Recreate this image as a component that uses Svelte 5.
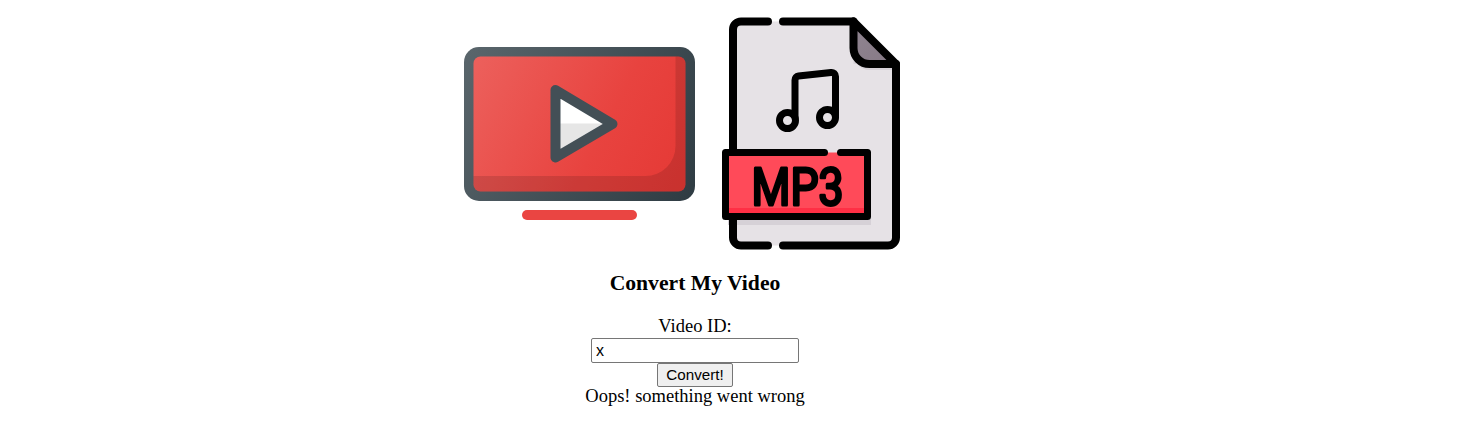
<script>
  let videoId = $state('x');
  let error = $state('Oops! something went wrong');
</script>

<div class="page">
  <div class="icons">
    <svg class="icon" width="232" height="240" viewBox="463 10 232 240">
      <defs>
        <linearGradient id="frame" x1="464" y1="60" x2="695" y2="190" gradientUnits="userSpaceOnUse">
          <stop offset="0" stop-color="#59656b" />
          <stop offset="1" stop-color="#2f3c43" />
        </linearGradient>
        <linearGradient id="screen" x1="474" y1="70" x2="686" y2="180" gradientUnits="userSpaceOnUse">
          <stop offset="0" stop-color="#ec5f5b" />
          <stop offset="0.6" stop-color="#e8433f" />
          <stop offset="1" stop-color="#e53935" />
        </linearGradient>
      </defs>
      <rect x="464" y="47" width="231" height="154" rx="15" fill="url(#frame)" />
      <rect x="473.5" y="56.5" width="212" height="135" rx="7" fill="url(#screen)" />
      <path d="M675.5 56.5h3a7 7 0 0 1 7 7v121a7 7 0 0 1-7 7h-198a7 7 0 0 1-7-7v-8.500h172a30 30 0 0 0 30-30z" fill="#000" fill-opacity="0.12" />
      <path d="M555.500 90L612.500 124L555.500 157.500z" fill="#fff" />
      <path d="M555.500 123.500H611.500L612.500 124L555.500 157.500z" fill="#e6e6e6" />
      <path d="M555.500 90L612.500 124L555.500 157.500z" fill="none" stroke="#434f56" stroke-width="10" stroke-linejoin="round" />
      <rect x="522" y="210" width="115" height="10" rx="5" fill="#ea4542" />
    </svg>
    <svg class="icon" width="232" height="240" viewBox="695 10 232 240">
      <defs>
        <linearGradient id="fold" x1="858" y1="25" x2="892" y2="62" gradientUnits="userSpaceOnUse">
          <stop offset="0" stop-color="#8f8490" />
          <stop offset="1" stop-color="#877a86" />
        </linearGradient>
      </defs>
      <path d="M741 21.500H853.500L896 64V237.500a8 8 0 0 1-8 8H741a8 8 0 0 1-8-8V29.500a8 8 0 0 1 8-8z" fill="#e6e2e6" />
      <path d="M853.500 30V54a16 16 0 0 0 16 16H896V64H853.500z" fill="#d6d1d7" />
      <rect x="728" y="216" width="143" height="9" fill="#d6d1d7" />
      <path d="M853.500 21.500V48a16 16 0 0 0 16 16H896z" fill="url(#fold)" stroke="#000" stroke-width="8" stroke-linejoin="round" />
      <g fill="none" stroke="#000" stroke-width="8" stroke-linecap="round" stroke-linejoin="round">
        <path d="M768 21.500H741a8 8 0 0 0-8 8V150" />
        <path d="M733 220V237.500a8 8 0 0 0 8 8H768" />
        <path d="M783 245.500H888a8 8 0 0 0 8-8V64" />
        <path d="M783 21.500H853.500" />
      </g>
      <g fill="none" stroke="#000" stroke-width="7" stroke-linecap="round" stroke-linejoin="round">
        <path d="M795 118V80a4 4 0 0 1 3.500-4L831 72.500a4 4 0 0 1 4.500 4V116" />
        <circle cx="787.500" cy="120.500" r="8" fill="#e6e2e6" />
        <circle cx="827.500" cy="117.500" r="8" fill="#e6e2e6" />
      </g>
      <rect x="725.500" y="152.500" width="142" height="64" fill="#ff4a59" />
      <rect x="729" y="208" width="135" height="5" fill="#ff2f45" />
      <g fill="none" stroke="#000" stroke-width="7" stroke-linecap="round" stroke-linejoin="round">
        <path d="M824.500 152.500H725.500V216.500H867.500V152.500H840.500" />
      </g>
      <text class="mp3" x="797.500" y="205" text-anchor="middle" textLength="92" lengthAdjust="spacingAndGlyphs">MP3</text>
    </svg>
  </div>

  <h3 class="title">Convert My Video</h3>

  <form class="form" onsubmit={(e) => e.preventDefault()}>
    <label for="vid">Video ID:</label>
    <input id="vid" type="text" bind:value={videoId} />
    <button type="submit">Convert!</button>
    <div class="msg">{error}</div>
  </form>
</div>

<style>
  :global(body) {
    background: #fff;
    color: #000;
  }

  .page {
    width: 1390px;
    padding-top: 10px;
    font-family: "Liberation Serif", "Times New Roman", serif;
    font-size: 18.5px;
    text-align: center;
  }

  .icons {
    display: flex;
    justify-content: center;
  }

  .icon {
    display: block;
  }

  .mp3 {
    font-family: Roboto, "Liberation Sans", sans-serif;
    font-size: 52px;
    font-weight: 400;
    fill: #000;
    stroke: #000;
    stroke-width: 3;
    stroke-linejoin: round;
  }

  .title {
    margin: 21px 0 20px;
    font-size: 21.65px;
    font-weight: 700;
  }

  .form {
    display: flex;
    flex-direction: column;
    align-items: center;
  }

  label {
    margin-bottom: 1px;
  }

  input {
    width: 208px;
    height: 25px;
    box-sizing: border-box;
    padding: 1px 4px;
    font-family: "Liberation Sans", Arial, sans-serif;
    font-size: 16px;
    border: 1px solid #767676;
    border-radius: 2px;
    background: #fff;
    color: #000;
  }

  button {
    width: 76px;
    height: 24px;
    box-sizing: border-box;
    padding: 0 6px 2px;
    font-family: "Liberation Sans", Arial, sans-serif;
    font-size: 15.2px;
    border: 1px solid #767676;
    border-radius: 2px;
    background: #efefef;
    color: #000;
  }

  .msg {
    margin-top: -1px;
  }
</style>
